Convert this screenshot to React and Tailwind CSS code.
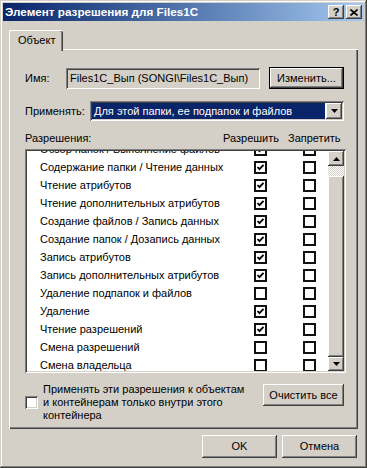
import React from 'react';

const raised =
  'bg-[#d4d0c8] shadow-[inset_-1px_-1px_#404040,inset_1px_1px_#ffffff,inset_-2px_-2px_#808080,inset_2px_2px_#d4d0c8]';
const sunken =
  'shadow-[inset_1px_1px_#808080,inset_-1px_-1px_#ffffff,inset_2px_2px_#404040,inset_-2px_-2px_#d4d0c8]';

const rows = [
  ['Обзор папок / Выполнение файлов', true],
  ['Содержание папки / Чтение данных', true],
  ['Чтение атрибутов', true],
  ['Чтение дополнительных атрибутов', true],
  ['Создание файлов / Запись данных', true],
  ['Создание папок / Дозапись данных', true],
  ['Запись атрибутов', true],
  ['Запись дополнительных атрибутов', true],
  ['Удаление подпапок и файлов', false],
  ['Удаление', true],
  ['Чтение разрешений', true],
  ['Смена разрешений', false],
  ['Смена владельца', false],
];

function ListCheck({ checked }) {
  return (
    <div className="w-[13px] h-[13px] border-2 border-[#111] bg-white flex items-center justify-center">
      {checked && (
        <svg width="9" height="9" viewBox="0 0 9 9">
          <path d="M1.5 4 L3.5 6.2 L7.5 1.8" fill="none" stroke="#000" strokeWidth="1.8" />
        </svg>
      )}
    </div>
  );
}

function Arrow({ up }) {
  return (
    <svg width="7" height="4" viewBox="0 0 7 4">
      <path d={up ? 'M3.5 0 L7 4 L0 4 Z' : 'M0 0 L7 0 L3.5 4 Z'} fill="#000" />
    </svg>
  );
}

export default function App() {
  return (
    <div
      className="w-[367px] h-[468px] bg-[#d4d0c8] p-[3px] flex flex-col text-[11px] text-black shadow-[inset_-1px_-1px_#404040,inset_1px_1px_#d4d0c8,inset_-2px_-2px_#808080,inset_2px_2px_#ffffff]"
      style={{ fontFamily: '"Liberation Sans", Arial, sans-serif' }}
    >
      {/* Title bar */}
      <div className="h-[18px] flex items-center justify-between pl-[2px] pr-[2px] bg-linear-to-r from-[#0a246a] to-[#a6caf0]">
        <span className="text-white font-bold text-[11.7px] leading-none">Элемент разрешения для Files1C</span>
        <div className="flex gap-[2px]">
          <div className={`w-[16px] h-[14px] flex items-center justify-center font-bold text-[11px] leading-none ${raised}`}>?</div>
          <div className={`w-[16px] h-[14px] flex items-center justify-center ${raised}`}>
            <svg width="8" height="7" viewBox="0 0 8 7">
              <path d="M0.5 0.5 L7.5 6.5 M7.5 0.5 L0.5 6.5" stroke="#000" strokeWidth="1.6" />
            </svg>
          </div>
        </div>
      </div>

      <div className="pl-[6px] pt-[9px]">
        {/* Tab */}
        <div className="relative z-10 w-[54px] h-[21px] -mb-[2px] bg-[#d4d0c8] border-l border-t border-white rounded-tl-[2px] rounded-tr-[2px] shadow-[inset_-1px_0_#404040,inset_-2px_0_#808080] pl-[8px] pt-[3px] leading-[13px]">
          Объект
        </div>

        {/* Panel */}
        <div className="w-[349px] h-[380px] border-l border-t border-white shadow-[inset_-1px_-1px_#404040,inset_-2px_-2px_#808080] pl-[15px] pr-[14px] pt-[17px] flex flex-col">
          <div className="flex items-center h-[22px]">
            <span className="w-[41px]">Имя:</span>
            <div className={`w-[194px] h-[21px] flex items-center pl-[4px] ${sunken}`}>Files1C_Вып (SONGI\Files1C_Вып)</div>
            <div className="ml-auto w-[75px] h-[22px] border border-black">
              <div className={`w-full h-full flex items-center justify-center ${raised}`}>Изменить...</div>
            </div>
          </div>

          <div className="flex items-center h-[20px] mt-[12px]">
            <span className="w-[65px]">Применять:</span>
            <div className={`flex-1 h-[20px] bg-white p-[2px] flex ${sunken}`}>
              <div className="flex-1 bg-[#0a246a] text-white flex items-center pl-[2px] mr-[1px]">Для этой папки, ее подпапок и файлов</div>
              <div className={`w-[16px] h-full flex items-center justify-center ${raised}`}>
                <Arrow />
              </div>
            </div>
          </div>

          <div className="flex h-[14px] leading-[14px] mt-[10px]">
            <span className="w-[198px]">Разрешения:</span>
            <span className="w-[65px]">Разрешить</span>
            <span>Запретить</span>
          </div>

          <div className={`mt-[4px] w-[321px] h-[224px] bg-white p-[2px] flex ${sunken}`}>
            <div className="flex-1 overflow-hidden">
              <div className="-mt-[11px] flex flex-col">
                {rows.map(([name, allow]) => (
                  <div key={name} className="h-[18px] flex items-center pl-[13px]">
                    <span className="w-[214px] whitespace-nowrap leading-[13px]">{name}</span>
                    <ListCheck checked={allow} />
                    <div className="w-[36px]" />
                    <ListCheck checked={false} />
                  </div>
                ))}
              </div>
            </div>
            <div className="w-[16px] flex flex-col">
              <div className={`h-[15px] flex items-center justify-center ${raised}`}>
                <Arrow up />
              </div>
              <div className="h-[10px] bg-[image:repeating-conic-gradient(#ffffff_0%_25%,#d4d0c8_0%_50%)] bg-[length:2px_2px]" />
              <div className={`flex-1 ${raised}`} />
              <div className={`h-[14px] flex items-center justify-center ${raised}`}>
                <Arrow />
              </div>
            </div>
          </div>

          <div className="flex mt-[10px]">
            <div className="flex items-center">
              <div className={`w-[13px] h-[13px] bg-white ${sunken}`} />
            </div>
            <div className="ml-[5px] leading-[13px] w-[205px]">
              Применять эти разрешения к объектам и контейнерам только внутри этого контейнера
            </div>
            <div className={`ml-auto mt-[1px] w-[81px] h-[22px] flex items-center justify-center ${raised}`}>Очистить все</div>
          </div>
        </div>
      </div>

      <div className="flex justify-end gap-[5px] pr-[7px] mt-[6px]">
        <div className={`w-[75px] h-[23px] flex items-center justify-center ${raised}`}>OK</div>
        <div className={`w-[75px] h-[23px] flex items-center justify-center ${raised}`}>Отмена</div>
      </div>
    </div>
  );
}
